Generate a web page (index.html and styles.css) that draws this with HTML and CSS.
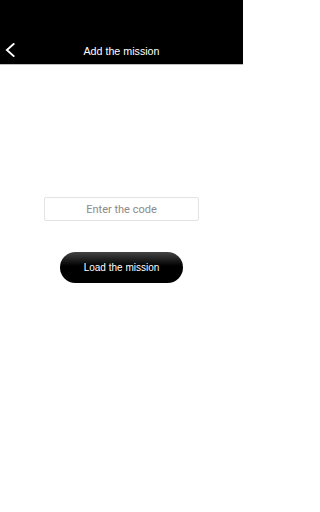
FILE: index.html
```html
<!DOCTYPE html>
<html>
<head>
<meta charset="utf-8">
<meta name="viewport" content="width=243">
<link rel="stylesheet" href="styles.css">
</head>
<body>
<div class="page">
<header class="header">
  <button class="back" aria-label="Back">
    <svg width="12" height="14" viewBox="0 0 12 14"><path d="M9.6 1 L2.9 7 L9.6 13" fill="none" stroke="#fff" stroke-width="1.9" stroke-linecap="square" stroke-linejoin="miter"/></svg>
  </button>
  <h1 class="title">Add the mission</h1>
</header>
<main class="main">
  <input class="code" type="text" placeholder="Enter the code">
  <button class="load">Load the mission</button>
</main>
</div>
</body>
</html>
```
FILE: styles.css
```css
html, body {
  margin: 0;
  padding: 0;
  background: #fff;
  font-family: "Liberation Sans", Arial, sans-serif;
}
.page {
  width: 243px;
  height: 512px;
  overflow: hidden;
}
.header {
  height: 64px;
  background: #000;
  border-bottom: 1px solid #bdbdbd;
  position: relative;
  display: flex;
  align-items: flex-end;
  justify-content: center;
}
.back {
  position: absolute;
  left: 4px;
  bottom: 7px;
  padding: 0;
  border: 0;
  background: none;
  width: 12px;
  height: 14px;
  display: flex;
  align-items: center;
}
.title {
  margin: 0 0 7px;
  color: #fff;
  font-size: 10.7px;
  font-weight: normal;
  line-height: 12px;
}
.main {
  display: flex;
  flex-direction: column;
  align-items: center;
  padding-top: 132px;
}
.code {
  box-sizing: border-box;
  width: 155px;
  height: 24px;
  border: 1px solid #e3e3e3;
  border-radius: 2px;
  padding: 0;
  text-align: center;
  font-family: Roboto, sans-serif;
  font-size: 11px;
  color: #333;
  outline: none;
}
.code::placeholder {
  color: #8a8a8a;
}
.load {
  margin-top: 31px;
  width: 123px;
  height: 31px;
  border: 0;
  border-radius: 16px;
  background: linear-gradient(#444 0%, #000 45%, #000 100%);
  color: #fff;
  font-family: "Liberation Sans", Arial, sans-serif;
  font-size: 10px;
  padding: 0;
}
```
